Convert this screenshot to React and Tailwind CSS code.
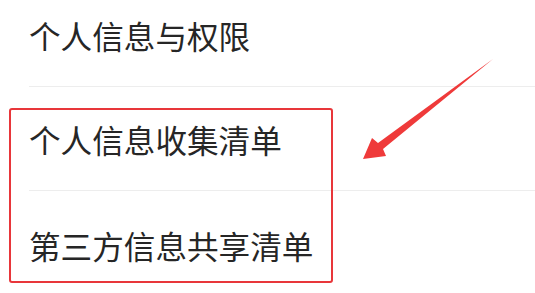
import React from "react";

const rows = [
  { label: "个人信息与权限", cls: "h-[87px] pb-[14px] border-b border-[#ededed]" },
  { label: "个人信息收集清单", cls: "h-[104px] pt-[2px] border-b border-[#ededed]" },
  { label: "第三方信息共享清单", cls: "h-[102px] pt-[8px]" },
];

const Arrow = () => (
  <svg
    className="absolute left-0 top-0 pointer-events-none"
    width="535"
    height="293"
    viewBox="0 0 535 293"
  >
    <polygon
      points="363,159 372,138 378,143 493,59 383,149 386,156"
      fill="#ef3a3a"
    />
  </svg>
);

export default function App() {
  return (
    <div
      className="relative w-[535px] h-[293px] overflow-hidden bg-white"
      style={{ fontFamily: '"Noto Sans CJK SC", "Noto Sans", sans-serif' }}
    >
      <div className="pl-[29px]">
        {rows.map((r) => (
          <div key={r.label} className={`flex items-center ${r.cls}`}>
            <span className="text-[31.6px] text-[#262626] leading-none">{r.label}</span>
          </div>
        ))}
      </div>

      {/* annotation overlay */}
      <div className="absolute left-[9px] top-[108px] w-[324px] h-[175px] border-2 border-[#e8363a] rounded-[3px]" />
      <Arrow />
    </div>
  );
}
